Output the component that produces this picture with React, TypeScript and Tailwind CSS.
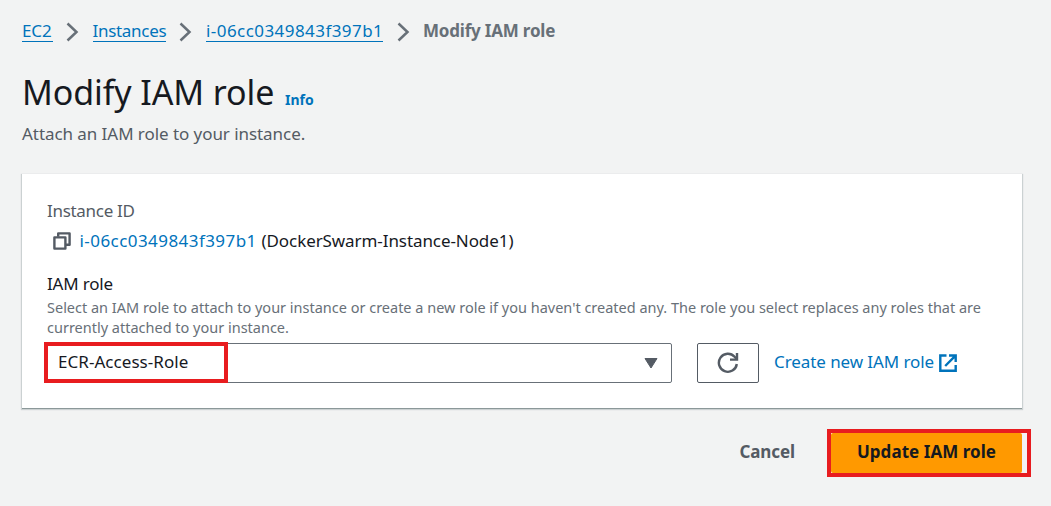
import React from "react";

function Chevron() {
  return (
    <svg className="h-5 w-[13px] shrink-0" viewBox="0 0 13 20" fill="none" stroke="#687078" strokeWidth="2.5">
      <path d="M1.5 1.5 L10.5 10 L1.5 18.5" />
    </svg>
  );
}

function CopyIcon() {
  return (
    <svg className="h-[18px] w-[18px] shrink-0" viewBox="0 0 18 18" fill="none" stroke="#545b64" strokeWidth="2.4" strokeLinejoin="round">
      <path d="M1.4 5.4H12.4V16.6H1.4Z" />
      <path d="M5.2 4.8V1.4H16.6V12.8H13" />
    </svg>
  );
}

function RefreshIcon() {
  return (
    <svg className="h-[22px] w-[22px]" viewBox="0 0 22 22" fill="none" stroke="#545b64" strokeWidth="2.4">
      <path d="M19.8 12A9 9 0 1 1 17.6 4.8L19.6 7" />
      <path d="M13 7.6H20V1" />
    </svg>
  );
}

function ExternalIcon() {
  return (
    <svg className="mt-[1px] h-[18px] w-[18px] shrink-0" viewBox="0 0 18 18" fill="none" stroke="#0073bb" strokeWidth="2.4">
      <path d="M7.5 1.5H1.3V16.7H16.7V11" />
      <path d="M10 1.5H16.7V8M16.5 1.7L6.2 12" />
    </svg>
  );
}

export default function App() {
  return (
    <div className="h-[506px] w-[1051px] overflow-hidden bg-[#f2f3f3] pr-[29px] pl-[22px] font-['Noto_Sans',sans-serif] text-[17px] leading-6 whitespace-nowrap text-[#16191f]">
      <nav className="flex h-[42px] items-end text-[#0073bb]">
        <a className="mr-[13px] h-[23px] w-[30.5px] border-b border-[#0073bb] tracking-[-0.1px]">EC2</a>
        <Chevron />
        <a className="mr-[13px] ml-[14px] h-[23px] w-[73.5px] border-b border-[#0073bb] tracking-[-0.3px]">Instances</a>
        <Chevron />
        <a className="mr-[14px] ml-[14px] h-[23px] w-[177px] border-b border-[#0073bb] tracking-[0.44px]">i-06cc0349843f397b1</a>
        <Chevron />
        <span className="ml-[13px] h-[23px] font-bold tracking-[-0.2px] text-[#687078]">Modify IAM role</span>
      </nav>

      <header className="pt-[29px]">
        <div className="flex h-[44px] items-baseline">
          <h1 className="w-[263px] text-[34px] leading-[42px] tracking-[-0.1px]">Modify IAM role</h1>
          <a className="text-[14px] leading-5 font-bold tracking-[0px] text-[#0073bb]">Info</a>
        </div>
        <p className="mt-[7px] tracking-[-0.06px] text-[#545b64]">Attach an IAM role to your instance.</p>
      </header>

      <main className="mt-[28px] h-[234px] w-[1000px] bg-white px-[25px] pt-[25px] shadow-[0_1px_0_0_#8b9899,0_1px_1px_1px_rgba(0,28,36,0.16)]">
        <div className="tracking-[-0.3px] text-[#545b64]">Instance ID</div>
        <div className="mt-[6px] flex items-center pl-[6px]">
          <CopyIcon />
          <a className="ml-[8.5px] w-[182px] tracking-[0.44px] text-[#0073bb]">i-06cc0349843f397b1</a>
          <span className="tracking-[-0.08px]">(DockerSwarm-Instance-Node1)</span>
        </div>
        <div className="mt-[19px] tracking-[-0.2px]">IAM role</div>
        <div className="mt-[1px] text-[14.5px] leading-5 tracking-[-0.005px] text-[#687078]">
          <p>Select an IAM role to attach to your instance or create a new role if you haven't created any. The role you select replaces any roles that are</p>
          <p>currently attached to your instance.</p>
        </div>
        <div className="mt-[6px] flex">
          <div className="relative flex h-10 w-[625px] items-center justify-between rounded-[2px] border border-[#687078] pr-[13px] pl-[10px]">
            <span className="mb-[3px] tracking-[0.05px]">ECR-Access-Role</span>
            <svg className="h-[11px] w-[14px]" viewBox="0 0 14 11" fill="#545b64">
              <path d="M1 .5H13L7 10Z" stroke="#545b64" strokeLinejoin="round" />
            </svg>
            <div className="absolute -top-[2px] -left-[4px] h-[41px] w-[184px] border-[4px] border-[#e81c1f]" />
          </div>
          <button className="ml-[25px] flex h-10 w-[62px] items-center justify-center rounded-[2px] border border-[#545b64]">
            <RefreshIcon />
          </button>
          <a className="ml-[15px] flex h-[38px] items-center text-[#0073bb]">
            <span className="w-[165px] tracking-[-0.08px]">Create new IAM role</span>
            <ExternalIcon />
          </a>
        </div>
      </main>

      <footer className="mt-[25px] flex h-10 justify-end font-bold">
        <button className="mr-[36px] pb-[2px] tracking-[-0.1px] text-[#545b64]">Cancel</button>
        <button className="relative w-[191px] rounded-[2px] bg-[#ff9900] pb-[2px] tracking-[0.05px]">
          Update IAM role
          <span className="absolute -top-1 -left-1 h-12 w-[204px] border-4 border-[#e81c1f]" />
        </button>
      </footer>
    </div>
  );
}
